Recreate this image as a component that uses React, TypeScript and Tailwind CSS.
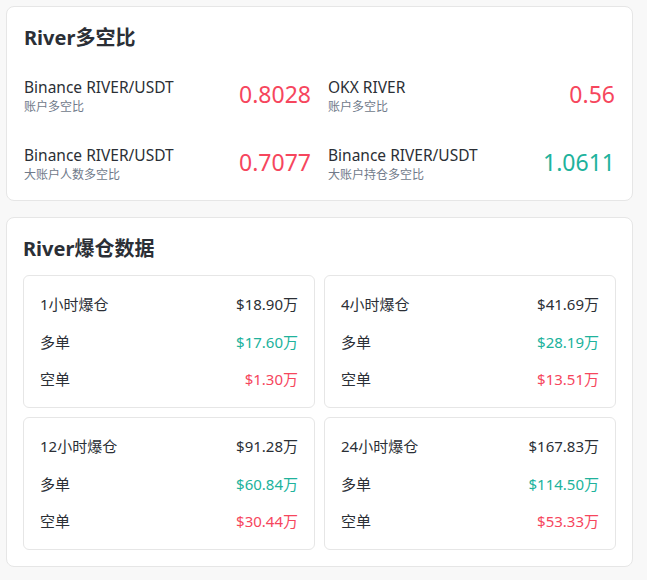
import React from "react";

const RED = "text-[#f6465d]";
const GREEN = "text-[#20b29c]";

const ratios = [
  { name: "Binance RIVER/USDT", sub: "账户多空比", value: "0.8028", up: false },
  { name: "OKX RIVER", sub: "账户多空比", value: "0.56", up: false },
  { name: "Binance RIVER/USDT", sub: "大账户人数多空比", value: "0.7077", up: false },
  { name: "Binance RIVER/USDT", sub: "大账户持仓多空比", value: "1.0611", up: true },
];

const liqs = [
  { label: "1小时爆仓", total: "$18.90万", long: "$17.60万", short: "$1.30万" },
  { label: "4小时爆仓", total: "$41.69万", long: "$28.19万", short: "$13.51万" },
  { label: "12小时爆仓", total: "$91.28万", long: "$60.84万", short: "$30.44万" },
  { label: "24小时爆仓", total: "$167.83万", long: "$114.50万", short: "$53.33万" },
];

export default function App() {
  return (
    <div
      className="min-h-[580px] bg-[#f8f8f8] p-[6px] pr-[14px] text-[#1e2329]"
      style={{ fontFamily: '"Noto Sans", "Noto Sans CJK SC", sans-serif' }}
    >
      <div className="rounded-lg border border-[#e6e6e6] bg-white px-[17px] pt-[17px] pb-[16px]">
        <h2 className="text-[20px] leading-[28px] font-bold text-[#2b2f36]">River多空比</h2>
        <div className="mt-[25px] grid grid-cols-2 gap-x-[17px] gap-y-[29px]">
          {ratios.map((r, i) => (
            <div key={i} className="flex items-center justify-between">
              <div>
                <div className="text-[15.5px] leading-[21px] text-[#2b2f36]">{r.name}</div>
                <div className="text-[12px] leading-[18px] text-[#707a8a]">{r.sub}</div>
              </div>
              <div className={`pb-[5px] text-[23px] leading-[30px] ${r.up ? GREEN : RED}`}>{r.value}</div>
            </div>
          ))}
        </div>
      </div>

      <div className="mt-[16px] rounded-lg border border-[#e6e6e6] bg-white px-[16px] pt-[17px] pb-[16px]">
        <h2 className="text-[20px] leading-[28px] font-bold text-[#2b2f36]">River爆仓数据</h2>
        <div className="mt-[12px] grid grid-cols-2 gap-[9px]">
          {liqs.map((l, i) => (
            <div
              key={i}
              className="flex flex-col gap-[15.5px] rounded-md border border-[#e6e6e6] px-[16px] pt-[17px] pb-[17px] text-[15px] leading-[22px]"
            >
              <div className="flex justify-between">
                <span className="text-[#2b2f36]">{l.label}</span>
                <span className="text-[#2b2f36]">{l.total}</span>
              </div>
              <div className="flex justify-between">
                <span className="text-[#2b2f36]">多单</span>
                <span className={GREEN}>{l.long}</span>
              </div>
              <div className="flex justify-between">
                <span className="text-[#2b2f36]">空单</span>
                <span className={RED}>{l.short}</span>
              </div>
            </div>
          ))}
        </div>
      </div>
    </div>
  );
}
